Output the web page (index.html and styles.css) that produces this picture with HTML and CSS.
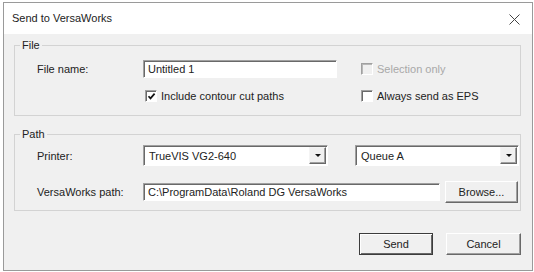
FILE: index.html
```html
<!DOCTYPE html>
<html lang="en">
<head>
    <meta charset="UTF-8">
    <title>Send to VersaWorks</title>
    <link rel="stylesheet" href="styles.css">
</head>
<body>
    <div class="window">
        <!-- Title bar -->
        <div class="titlebar">
            <span class="title">Send to VersaWorks</span>
            <svg class="close" width="11" height="11" viewBox="0 0 11 11">
                <path d="M0.5 0.5L10.5 10.5M10.5 0.5L0.5 10.5" stroke="#444" stroke-width="1"/>
            </svg>
        </div>

        <div class="content">
            <!-- File group -->
            <fieldset class="group group-file">
                <legend>File</legend>
                <div class="row row-name">
                    <label class="field-label">File name:</label>
                    <div class="textbox name-box">Untitled 1</div>
                    <div class="checkrow disabled"><span class="check"></span>Selection only</div>
                </div>
                <div class="row row-opts">
                    <div class="checkrow contour">
                        <span class="check">
                            <svg width="9" height="9" viewBox="0 0 9 9"><path d="M1.5 4.2L3.5 6.4L7.6 1.6" fill="none" stroke="#111" stroke-width="1.7"/></svg>
                        </span>Include contour cut paths
                    </div>
                    <div class="checkrow"><span class="check"></span>Always send as EPS</div>
                </div>
            </fieldset>

            <!-- Path group -->
            <fieldset class="group group-path">
                <legend>Path</legend>
                <div class="row row-printer">
                    <label class="field-label">Printer:</label>
                    <div class="combo printer-combo">
                        <span class="combo-text">TrueVIS VG2-640</span>
                        <span class="combo-btn"><span class="arrow"></span></span>
                    </div>
                    <div class="combo queue-combo">
                        <span class="combo-text">Queue A</span>
                        <span class="combo-btn"><span class="arrow"></span></span>
                    </div>
                </div>
                <div class="row row-path">
                    <label class="field-label">VersaWorks path:</label>
                    <div class="textbox path-box">C:\ProgramData\Roland DG VersaWorks</div>
                    <button class="btn browse-btn">Browse...</button>
                </div>
            </fieldset>

            <!-- Dialog buttons -->
            <div class="actions">
                <button class="btn default">Send</button>
                <button class="btn">Cancel</button>
            </div>
        </div>
    </div>
</body>
</html>
```

FILE: styles.css
```css
body {
    margin: 0;
    padding: 0;
    background-color: #FFFFFF;
    font-family: "Liberation Sans", Arial, sans-serif;
    font-size: 11px;
    color: #222222;
}
.window {
    box-sizing: border-box;
    width: 530px;
    height: 269px;
    margin: 2px 0 0 3px;
    border: 1px solid #9a9a9a;
    background-color: #F0F0F0;
}
.titlebar {
    height: 31px;
    background-color: #FFFFFF;
    display: flex;
    align-items: center;
    justify-content: space-between;
    padding: 0 12px 0 8px;
}
.title {
    color: #222222;
    padding-bottom: 1px;
}
.close {
    display: block;
    margin-top: 2px;
}
.content {
    padding: 5px 11px 0 10px;
}
.group {
    margin: 0;
    padding: 0 0 0 22px;
    border: 1px solid #D3D3D3;
    min-width: 0;
}
.group legend {
    margin-left: -17px;
    padding: 0 2px;
    line-height: 12px;
    color: #222222;
}
.group-file {
    padding-top: 9px;
    padding-bottom: 10px;
}
.group-path {
    margin-top: 12px;
    padding-top: 5px;
    padding-bottom: 7px;
}
.row {
    display: flex;
    align-items: center;
}
.field-label {
    width: 106px;
    flex: none;
}
.textbox {
    box-sizing: border-box;
    height: 18px;
    line-height: 15px;
    padding: 1px 0 0 4px;
    background-color: #FFFFFF;
    border: 1px solid;
    border-color: #A0A0A0 #FFFFFF #FFFFFF #A0A0A0;
    box-shadow: inset 1px 1px 0 #696969;
    white-space: nowrap;
    overflow: hidden;
}
.name-box {
    width: 194px;
    margin-right: 24px;
}
.row-opts {
    margin-top: 9px;
    height: 18px;
    padding-left: 108px;
}
.checkrow {
    display: flex;
    align-items: center;
}
.contour {
    width: 216px;
}
.check {
    box-sizing: border-box;
    width: 12px;
    height: 12px;
    margin-right: 4px;
    background-color: #FFFFFF;
    border: 1px solid;
    border-color: #A0A0A0 #FFFFFF #FFFFFF #A0A0A0;
    box-shadow: inset 1px 1px 0 #696969;
    display: flex;
    align-items: center;
    justify-content: center;
    padding: 1px 0 0 1px;
}
.check svg {
    display: block;
}
.checkrow.disabled {
    color: #A8A8A8;
}
.checkrow.disabled .check {
    background-color: #F0F0F0;
    box-shadow: inset 1px 1px 0 #B8B8B8;
}
.combo {
    box-sizing: border-box;
    height: 21px;
    display: flex;
    align-items: stretch;
    background-color: #FFFFFF;
    border: 1px solid;
    border-color: #A0A0A0 #FFFFFF #FFFFFF #A0A0A0;
    box-shadow: inset 1px 1px 0 #696969;
}
.combo-text {
    flex: 1;
    padding: 1px 0 0 5px;
    display: flex;
    align-items: center;
}
.combo-btn {
    box-sizing: border-box;
    width: 17px;
    margin: 1px 1px 1px 0;
    background-color: #F0F0F0;
    border: 1px solid;
    border-color: #F4F4F4 #696969 #696969 #F4F4F4;
    box-shadow: inset -1px -1px 0 #A0A0A0;
    display: flex;
    align-items: center;
    justify-content: center;
}
.arrow {
    width: 0;
    height: 0;
    border-left: 3px solid transparent;
    border-right: 3px solid transparent;
    border-top: 3px solid #111111;
}
.printer-combo {
    width: 185px;
    margin-right: 27px;
}
.queue-combo {
    width: 164px;
}
.row-path {
    margin-top: 15px;
}
.path-box {
    width: 297px;
    margin-right: 5px;
}
.btn {
    box-sizing: border-box;
    height: 22px;
    padding: 0;
    font-family: "Liberation Sans", Arial, sans-serif;
    font-size: 11px;
    color: #222222;
    background-color: #F0F0F0;
    border: 1px solid;
    border-color: #FFFFFF #696969 #696969 #FFFFFF;
    box-shadow: inset -1px -1px 0 #A0A0A0;
}
.browse-btn {
    width: 73px;
}
.actions {
    display: flex;
    justify-content: flex-end;
    gap: 13px;
    margin-top: 22px;
}
.actions .btn {
    width: 75px;
}
.btn.default {
    width: 74px;
    border-color: #3C3C3C;
    box-shadow: inset 1px 1px 0 #FFFFFF, inset -1px -1px 0 #696969;
}
```
